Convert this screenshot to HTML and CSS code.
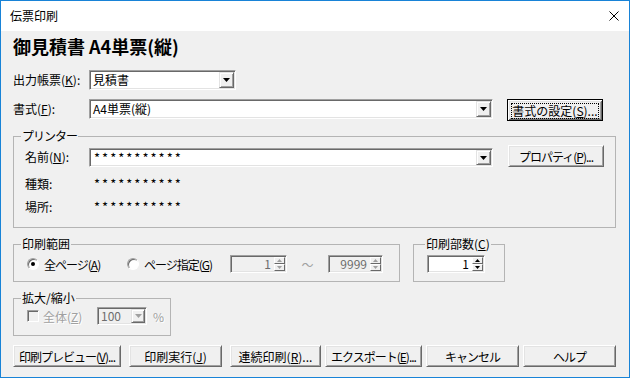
FILE: index.html
```html
<!DOCTYPE html>
<html lang="ja">
<head>
    <meta charset="UTF-8">
    <title>伝票印刷</title>
    <link rel="stylesheet" href="styles.css">
</head>
<body>
<div class="window">
    <div class="titlebar">
        <span class="title">伝票印刷</span>
        <svg class="close-icon" width="10" height="10" viewBox="0 0 10 10"><path d="M0.5 0.5L9.5 9.5M9.5 0.5L0.5 9.5" stroke="#000" stroke-width="1"/></svg>
    </div>
    <div class="content">
        <h1 class="heading">御見積書 A4単票(縦)</h1>

        <div class="form-row">
            <span class="field-label">出力帳票(<u>K</u>):</span>
            <div class="combo combo-short">
                <span class="combo-text">見積書</span>
                <span class="drop-btn"><svg width="7" height="4"><path d="M0 0h7L3.5 4z"/></svg></span>
            </div>
        </div>

        <div class="form-row row-format">
            <span class="field-label">書式(<u>F</u>):</span>
            <div class="combo combo-long">
                <span class="combo-text">A4単票(縦)</span>
                <span class="drop-btn"><svg width="7" height="4"><path d="M0 0h7L3.5 4z"/></svg></span>
            </div>
            <button class="btn btn-default btn-format"><span class="focus-rect">書式の設定(<u>S</u>)...</span></button>
        </div>

        <fieldset class="group group-printer">
            <legend class="kana">プリンター</legend>
            <div class="printer-body">
                <div class="printer-row">
                    <span class="printer-label">名前(<u>N</u>):</span>
                    <div class="combo combo-long combo-name">
                        <span class="combo-text stars">***********</span>
                        <span class="drop-btn"><svg width="7" height="4"><path d="M0 0h7L3.5 4z"/></svg></span>
                    </div>
                    <button class="btn btn-prop kana">プロパティ(<u>P</u>)...</button>
                </div>
                <div class="info-row">
                    <span class="printer-label">種類:</span>
                    <span class="info-value stars">***********</span>
                </div>
                <div class="info-row info-row-last">
                    <span class="printer-label">場所:</span>
                    <span class="info-value stars">***********</span>
                </div>
            </div>
        </fieldset>

        <div class="range-row">
            <fieldset class="group group-range">
                <legend>印刷範囲</legend>
                <div class="range-body">
                    <label class="radio-label radio-all">
                        <span class="radio radio-on"></span>
                        <span class="kana">全ページ(<u>A</u>)</span>
                    </label>
                    <label class="radio-label radio-pages">
                        <span class="radio"></span>
                        <span class="kana">ページ指定(<u>G</u>)</span>
                    </label>
                    <div class="spinner spinner-off spinner-from">
                        <span class="spin-value">1</span>
                        <span class="spin-btns">
                            <span class="spin-btn"><svg width="5" height="3"><path d="M0 3h5L2.5 0z"/></svg></span>
                            <span class="spin-btn"><svg width="5" height="3"><path d="M0 0h5L2.5 3z"/></svg></span>
                        </span>
                    </div>
                    <span class="tilde">〜</span>
                    <div class="spinner spinner-off spinner-to">
                        <span class="spin-value">9999</span>
                        <span class="spin-btns">
                            <span class="spin-btn"><svg width="5" height="3"><path d="M0 3h5L2.5 0z"/></svg></span>
                            <span class="spin-btn"><svg width="5" height="3"><path d="M0 0h5L2.5 3z"/></svg></span>
                        </span>
                    </div>
                </div>
            </fieldset>

            <fieldset class="group group-copies">
                <legend class="legend-copies">印刷部数(<u>C</u>)</legend>
                <div class="range-body">
                    <div class="spinner spinner-copies">
                        <span class="spin-value">1</span>
                        <span class="spin-btns">
                            <span class="spin-btn"><svg width="5" height="3"><path d="M0 3h5L2.5 0z"/></svg></span>
                            <span class="spin-btn"><svg width="5" height="3"><path d="M0 0h5L2.5 3z"/></svg></span>
                        </span>
                    </div>
                </div>
            </fieldset>
        </div>

        <fieldset class="group group-zoom">
            <legend>拡大/縮小</legend>
            <div class="zoom-body">
                <label class="check-label">
                    <span class="checkbox"></span>
                    <span class="disabled-text">全体(<u>Z</u>)</span>
                </label>
                <div class="combo combo-off combo-zoom">
                    <span class="combo-text">100</span>
                    <span class="drop-btn"><svg width="7" height="4"><path d="M0 0h7L3.5 4z"/></svg></span>
                </div>
                <span class="percent disabled-text">%</span>
            </div>
        </fieldset>

        <div class="actions">
            <div class="action-group">
                <button class="btn btn-preview kana">印刷プレビュー(<u>V</u>)...</button>
                <button class="btn btn-print">印刷実行(<u>J</u>)</button>
                <button class="btn btn-batch">連続印刷(<u>R</u>)...</button>
            </div>
            <div class="action-group action-group-right">
                <button class="btn btn-export kana">エクスポート(<u>E</u>)...</button>
                <button class="btn btn-cancel kana">キャンセル</button>
                <button class="btn btn-help kana">ヘルプ</button>
            </div>
        </div>
    </div>
</div>
</body>
</html>
```

FILE: styles.css
```css
body {
    margin: 0;
    font-family: "Noto Sans CJK JP", "Noto Sans", sans-serif;
    font-size: 12px;
    color: #000;
}

.window {
    width: 630px;
    height: 378px;
    box-sizing: border-box;
    border: 1px solid #1883d7;
    background: #f0f0f0;
    display: flex;
    flex-direction: column;
}

.titlebar {
    height: 30px;
    flex-shrink: 0;
    background: #fff;
    display: flex;
    align-items: center;
    justify-content: space-between;
    padding: 0 10px 0 9px;
}

.title {
    line-height: 14px;
}

.content {
    padding: 3px 13px 0 12px;
}

.heading {
    margin: 0;
    font-size: 18px;
    line-height: 24px;
    font-weight: bold;
}

.kana {
    letter-spacing: -1px;
}

/* top rows */
.form-row {
    display: flex;
    align-items: flex-start;
    margin-top: 12px;
}

.row-format {
    margin-top: 9px;
}

.field-label {
    width: 76px;
    line-height: 20px;
}

/* combo boxes */
.combo {
    box-sizing: border-box;
    height: 20px;
    display: flex;
    padding: 1px;
    border: 1px solid;
    border-color: #a0a0a0 #fff #fff #a0a0a0;
    box-shadow: inset 1px 1px #696969, inset -1px -1px #e3e3e3;
    background: #fff;
}

.combo-text {
    flex: 1;
    padding-left: 2px;
    line-height: 16px;
    white-space: nowrap;
}

.combo-short {
    width: 147px;
}

.combo-long {
    width: 404px;
}

.combo-name {
    height: 19px;
}

.drop-btn {
    width: 15px;
    box-sizing: border-box;
    display: flex;
    align-items: center;
    justify-content: center;
    background: #f0f0f0;
    border: 1px solid;
    border-color: #e3e3e3 #696969 #696969 #e3e3e3;
    box-shadow: inset 1px 1px #fff, inset -1px -1px #a0a0a0;
}

.drop-btn svg {
    fill: #000;
}

.combo-off {
    background: #f0f0f0;
    color: #6d6d6d;
}

.combo-off .drop-btn svg {
    fill: #a0a0a0;
}

.combo-zoom {
    width: 50px;
    height: 18px;
}

.combo-zoom .combo-text {
    line-height: 14px;
}

.combo-zoom .drop-btn {
    width: 14px;
}

/* buttons */
.btn {
    box-sizing: border-box;
    height: 22px;
    padding: 0;
    font-family: inherit;
    font-size: 12px;
    color: #000;
    background: #f0f0f0;
    border: 1px solid;
    border-color: #fff #696969 #696969 #fff;
    box-shadow: inset 1px 1px #e3e3e3, inset -1px -1px #a0a0a0;
    white-space: nowrap;
}

.btn-default {
    border: 1px solid #000;
    box-shadow: inset 1px 1px #fff, inset -1px -1px #696969, inset 2px 2px #e3e3e3, inset -2px -2px #a0a0a0;
    padding: 3px;
}

.focus-rect {
    display: block;
    height: 14px;
    line-height: 14px;
    border: 1px dotted #000;
}

.btn-format {
    width: 96px;
    margin-left: 14px;
}

.btn-prop {
    width: 96px;
    margin-left: 15px;
}

/* group boxes */
.group {
    margin: 0;
    padding: 0;
    min-width: 0;
    box-sizing: border-box;
    border: 1px solid #b4b4b4;
}

.group legend {
    padding: 0 1px;
    margin-left: 7px;
    line-height: 14px;
}

.group-printer {
    margin-top: 8px;
}

.printer-body {
    padding: 2px 10px 11px 11px;
}

.printer-row {
    display: flex;
    align-items: flex-end;
    height: 22px;
}

.printer-label {
    width: 64px;
    align-self: center;
}

.stars {
    font-size: 13px;
    letter-spacing: 2px;
}

.combo-text.stars {
    padding-left: 3px;
}

.info-row {
    display: flex;
    line-height: 18px;
    margin-top: 8px;
}

.info-row-last {
    margin-top: 5px;
}

.info-value {
    padding-left: 5px;
}

/* range and copies */
.range-row {
    display: flex;
    align-items: flex-start;
    margin-top: 9px;
}

.group-range {
    width: 387px;
}

.group-copies {
    width: 92px;
    margin-left: 13px;
}

.group .legend-copies {
    margin-left: 11px;
}

.range-body {
    display: flex;
    align-items: center;
    height: 18px;
    padding: 4px 0 8px 13px;
}

.radio-label {
    display: flex;
    align-items: center;
}

.radio-all {
    width: 100px;
}

.radio-pages {
    width: 103px;
}

.radio {
    width: 12px;
    height: 12px;
    box-sizing: border-box;
    margin-right: 5px;
    border-radius: 50%;
    border: 1px solid;
    border-color: #a0a0a0 #fff #fff #a0a0a0;
    box-shadow: inset 1px 1px #696969;
    background: #fff;
    display: flex;
    align-items: center;
    justify-content: center;
}

.radio-on::after {
    content: "";
    width: 4px;
    height: 4px;
    border-radius: 50%;
    background: #000;
}

.spinner {
    box-sizing: border-box;
    height: 18px;
    display: flex;
    padding: 1px;
    border: 1px solid;
    border-color: #a0a0a0 #fff #fff #a0a0a0;
    box-shadow: inset 1px 1px #696969, inset -1px -1px #e3e3e3;
    background: #fff;
}

.spin-value {
    flex: 1;
    text-align: right;
    padding-right: 3px;
    line-height: 14px;
}

.spin-btns {
    width: 11px;
    display: flex;
    flex-direction: column;
}

.spin-btn {
    flex: 1;
    box-sizing: border-box;
    display: flex;
    align-items: center;
    justify-content: center;
    background: #f0f0f0;
    border: 1px solid;
    border-color: #fff #696969 #696969 #fff;
}

.spin-btn svg {
    fill: #000;
}

.spinner-off {
    background: #f0f0f0;
    color: #6d6d6d;
}

.spinner-off .spin-btn svg {
    fill: #a0a0a0;
}

.spinner-from {
    width: 57px;
}

.spinner-to {
    width: 55px;
}

.spinner-copies {
    width: 58px;
}

.tilde {
    width: 41px;
    text-align: center;
    color: #a0a0a0;
}

/* zoom */
.group-zoom {
    width: 158px;
    margin-top: 9px;
}

.zoom-body {
    display: flex;
    align-items: center;
    height: 18px;
    padding: 2px 0 10px 13px;
}

.check-label {
    width: 70px;
    display: flex;
    align-items: center;
}

.checkbox {
    width: 12px;
    height: 12px;
    box-sizing: border-box;
    margin-right: 4px;
    border: 1px solid;
    border-color: #a0a0a0 #fff #fff #a0a0a0;
    box-shadow: inset 1px 1px #696969;
    background: #f0f0f0;
}

.disabled-text {
    color: #a0a0a0;
    text-shadow: 1px 1px #fff;
}

.percent {
    margin-left: 6px;
}

/* bottom buttons */
.actions {
    display: flex;
    gap: 4px;
    margin-top: 9px;
}

.action-group {
    display: flex;
    gap: 8px;
}

.action-group-right {
    gap: 4px;
}

.btn-preview { width: 108px; }
.btn-print { width: 93px; }
.btn-batch { width: 91px; }
.btn-export { width: 97px; }
.btn-cancel { width: 93px; }
.btn-help { width: 93px; }
```
